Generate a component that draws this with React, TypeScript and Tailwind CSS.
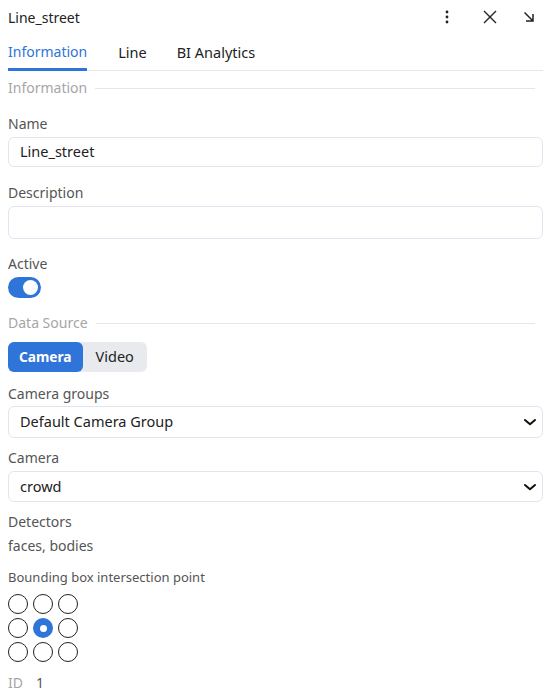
import React, { useState } from 'react';

const Divider = ({ label }: { label: string }) => (
  <div className="flex items-center gap-2 h-[20px]">
    <span className="text-[14px] leading-[20px] text-[#a6a6a6]">{label}</span>
    <div className="flex-1 h-px bg-[#e5e7eb] mr-2" />
  </div>
);

const Label = ({ children, className = '' }: { children: React.ReactNode; className?: string }) => (
  <div className={`text-[14px] leading-[20px] text-[#555] ${className}`}>{children}</div>
);

const Chevron = () => (
  <svg width="14" height="14" viewBox="0 0 14 14" fill="none">
    <path d="M2 5l5 4.3L12 5" stroke="#111" strokeWidth="2" strokeLinecap="round" strokeLinejoin="round" />
  </svg>
);

const Select = ({ value }: { value: string }) => (
  <div className="flex items-center justify-between h-full pl-[11px] pr-[5px] border border-[#e3e4f0] rounded-md text-[14.5px] text-[#222]">
    <span>{value}</span>
    <Chevron />
  </div>
);

const App = () => {
  const [active, setActive] = useState(true);
  const [point, setPoint] = useState(4);

  return (
    <div className="w-[558px] h-[696px] bg-white pl-2 pr-[15px] text-[#222] overflow-hidden" style={{ fontFamily: '"Noto Sans", sans-serif' }}>
      <div className="flex items-center justify-between h-[34px]">
        <span className="text-[14px]">Line_street</span>
        <div className="flex items-center pr-[7px]">
          <svg width="16" height="16" viewBox="0 0 16 16" fill="#222">
            <circle cx="8" cy="3" r="1.4" />
            <circle cx="8" cy="8" r="1.4" />
            <circle cx="8" cy="13" r="1.4" />
          </svg>
          <svg className="ml-[26px]" width="18" height="18" viewBox="0 0 18 18" fill="none" stroke="#222" strokeWidth="1.4">
            <path d="M3 3l12 12M15 3L3 15" />
          </svg>
          <svg className="ml-[23px]" width="14" height="14" viewBox="0 0 14 14" fill="none" stroke="#222" strokeWidth="1.5">
            <path d="M2.5 2.5l8 8M4 11h7V4" />
          </svg>
        </div>
      </div>

      <div className="flex items-end gap-[31px] h-[37px] border-b border-[#e5e7eb]">
        <div className="text-[14px] leading-[20px] text-[#2f74d8] pb-[6px] border-b-[3px] border-[#2f74d8] -mb-px">Information</div>
        <div className="text-[14.5px] leading-[20px] pb-[8px]">Line</div>
        <div className="text-[14.5px] leading-[20px] pb-[8px] -ml-[1px]">BI Analytics</div>
      </div>

      <div className="mt-[7px]">
        <Divider label="Information" />
      </div>

      <Label className="mt-[16px]">Name</Label>
      <div className="mt-[3px] flex items-center h-[30px] px-[11px] border border-[#e3e4f0] rounded-md text-[14.5px] text-[#222]">Line_street</div>

      <Label className="mt-[16px]">Description</Label>
      <div className="mt-[3px] h-[33px] border border-[#e3e4f0] rounded-md" />

      <Label className="mt-[15px]">Active</Label>
      <button
        onClick={() => setActive(!active)}
        className={`mt-[3px] flex items-center w-[33px] h-[21px] rounded-full px-[3px] ${active ? 'bg-[#2f74d8] justify-end' : 'bg-[#d1d5db] justify-start'}`}
      >
        <span className="w-[15px] h-[15px] rounded-full bg-white" />
      </button>

      <div className="mt-[15px]">
        <Divider label="Data Source" />
      </div>

      <div className="mt-[9px] flex w-fit bg-[#e9eaee] rounded-md">
        <div className="h-[30px] px-[11px] flex items-center rounded-md bg-[#2f74d8] text-white font-bold text-[13.7px]">Camera</div>
        <div className="h-[30px] px-[13px] flex items-center text-[14.5px] text-[#222]">Video</div>
      </div>

      <Label className="mt-[12px]">Camera groups</Label>
      <div className="mt-[2px] h-[32px]">
        <Select value="Default Camera Group" />
      </div>

      <Label className="mt-[10px]">Camera</Label>
      <div className="mt-[3px] h-[31px]">
        <Select value="crowd" />
      </div>

      <Label className="mt-[10px]">Detectors</Label>
      <Label className="mt-[4px]">faces, bodies</Label>

      <div className="mt-[11px] text-[13px] leading-[20px] text-[#555]">Bounding box intersection point</div>
      <div className="mt-[7px] grid grid-cols-[repeat(3,20px)] gap-x-[5px] gap-y-[4px]">
        {Array.from({ length: 9 }).map((_, i) => (
          <button
            key={i}
            onClick={() => setPoint(i)}
            className={`w-[20px] h-[20px] rounded-full flex items-center justify-center ${point === i ? 'bg-[#2f74d8]' : 'border-[1.5px] border-[#222]'}`}
          >
            {point === i && <span className="w-[7px] h-[7px] rounded-full bg-white" />}
          </button>
        ))}
      </div>

      <div className="mt-[11px] flex gap-[13px] text-[14px] leading-[20px]">
        <span className="text-[#a6a6a6]">ID</span>
        <span className="text-[#555]">1</span>
      </div>
    </div>
  );
};

export default App;
